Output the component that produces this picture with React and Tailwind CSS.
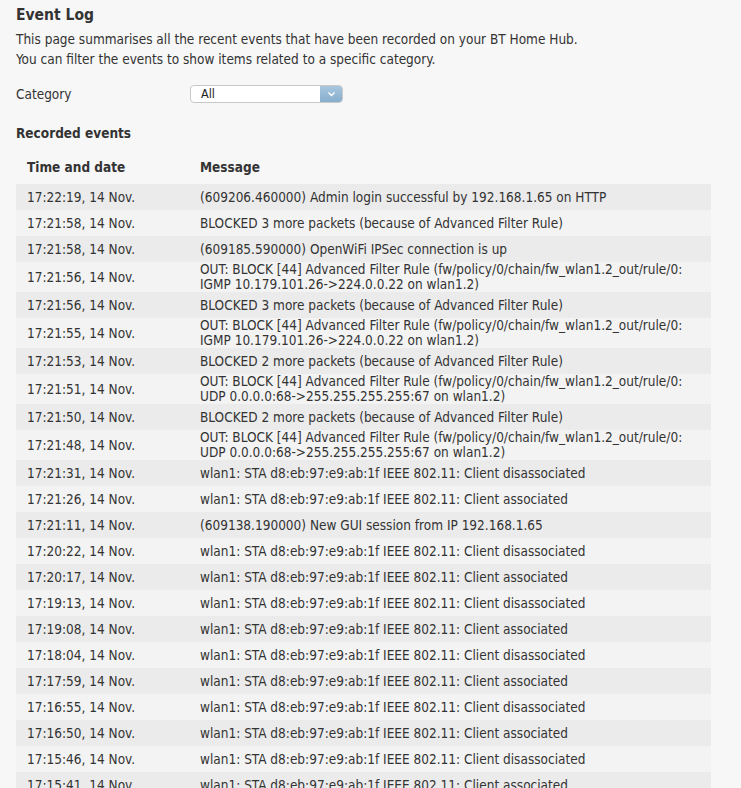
// Event Log page (BT Home Hub style)

const STA = 'wlan1: STA d8:eb:97:e9:ab:1f IEEE 802.11: Client';
const RULE = 'OUT: BLOCK [44] Advanced Filter Rule (fw/policy/0/chain/fw_wlan1.2_out/rule/0:';

const events = [
  ['17:22:19, 14 Nov.', ['(609206.460000) Admin login successful by 192.168.1.65 on HTTP']],
  ['17:21:58, 14 Nov.', ['BLOCKED 3 more packets (because of Advanced Filter Rule)']],
  ['17:21:58, 14 Nov.', ['(609185.590000) OpenWiFi IPSec connection is up']],
  ['17:21:56, 14 Nov.', [RULE, 'IGMP 10.179.101.26->224.0.0.22 on wlan1.2)']],
  ['17:21:56, 14 Nov.', ['BLOCKED 3 more packets (because of Advanced Filter Rule)']],
  ['17:21:55, 14 Nov.', [RULE, 'IGMP 10.179.101.26->224.0.0.22 on wlan1.2)']],
  ['17:21:53, 14 Nov.', ['BLOCKED 2 more packets (because of Advanced Filter Rule)']],
  ['17:21:51, 14 Nov.', [RULE, 'UDP 0.0.0.0:68->255.255.255.255:67 on wlan1.2)']],
  ['17:21:50, 14 Nov.', ['BLOCKED 2 more packets (because of Advanced Filter Rule)']],
  ['17:21:48, 14 Nov.', [RULE, 'UDP 0.0.0.0:68->255.255.255.255:67 on wlan1.2)']],
  ['17:21:31, 14 Nov.', [`${STA} disassociated`]],
  ['17:21:26, 14 Nov.', [`${STA} associated`]],
  ['17:21:11, 14 Nov.', ['(609138.190000) New GUI session from IP 192.168.1.65']],
  ['17:20:22, 14 Nov.', [`${STA} disassociated`]],
  ['17:20:17, 14 Nov.', [`${STA} associated`]],
  ['17:19:13, 14 Nov.', [`${STA} disassociated`]],
  ['17:19:08, 14 Nov.', [`${STA} associated`]],
  ['17:18:04, 14 Nov.', [`${STA} disassociated`]],
  ['17:17:59, 14 Nov.', [`${STA} associated`]],
  ['17:16:55, 14 Nov.', [`${STA} disassociated`]],
  ['17:16:50, 14 Nov.', [`${STA} associated`]],
  ['17:15:46, 14 Nov.', [`${STA} disassociated`]],
  ['17:15:41, 14 Nov.', [`${STA} associated`]],
];

function Chevron() {
  return (
    <svg width="9" height="6" viewBox="0 0 9 6" aria-hidden>
      <path d="M1.5 1.5 L4.5 4.5 L7.5 1.5" fill="none" stroke="#ffffff" strokeWidth="1.4" />
    </svg>
  );
}

export default function App() {
  return (
    <div
      className="min-h-[788px] bg-[#f7f7f7] px-4 pt-[5px] text-[13.5px] leading-[20px] text-[#333]"
      style={{ fontFamily: '"DejaVu Sans Condensed", "DejaVu Sans", sans-serif' }}
    >
      <h1 className="text-[15.5px] font-bold leading-[20px] text-[#333]">Event Log</h1>
      <p className="mt-[4px]">This page summarises all the recent events that have been recorded on your BT Home Hub.</p>
      <p>You can filter the events to show items related to a specific category.</p>

      <div className="mt-[15px] flex items-center">
        <span className="w-[174px]">Category</span>
        <div className="flex h-[18px] w-[153px] items-center rounded-[4px] border border-[#c9c9c9] bg-white">
          <span className="flex-1 pl-[10px] text-[12.5px] leading-[16px] text-[#222]">All</span>
          <span className="flex h-[16px] w-[22px] items-center justify-center rounded-r-[3px] bg-gradient-to-b from-[#a9c6de] to-[#86aecd]">
            <Chevron />
          </span>
        </div>
      </div>

      <h2 className="mt-[19px] font-bold">Recorded events</h2>

      <table className="mt-[10px] w-[695px] border-collapse">
        <thead>
          <tr>
            <th className="h-[27px] w-[184px] pl-[11px] text-left font-bold">Time and date</th>
            <th className="pl-0 text-left font-bold">Message</th>
          </tr>
        </thead>
        <tbody>
          <tr><td colSpan={2} className="h-[4px] p-0" /></tr>
          {events.map(([time, lines], i) => (
            <tr key={i} className={i % 2 === 0 ? 'bg-[#ebebeb]' : 'bg-[#f3f3f3]'}>
              <td className="h-[26px] pl-[11px] align-middle leading-[15px]">{time}</td>
              <td className="align-middle leading-[15px]">
                {lines.map((l, j) => (
                  <div key={j}>{l}</div>
                ))}
              </td>
            </tr>
          ))}
        </tbody>
      </table>
    </div>
  );
}
